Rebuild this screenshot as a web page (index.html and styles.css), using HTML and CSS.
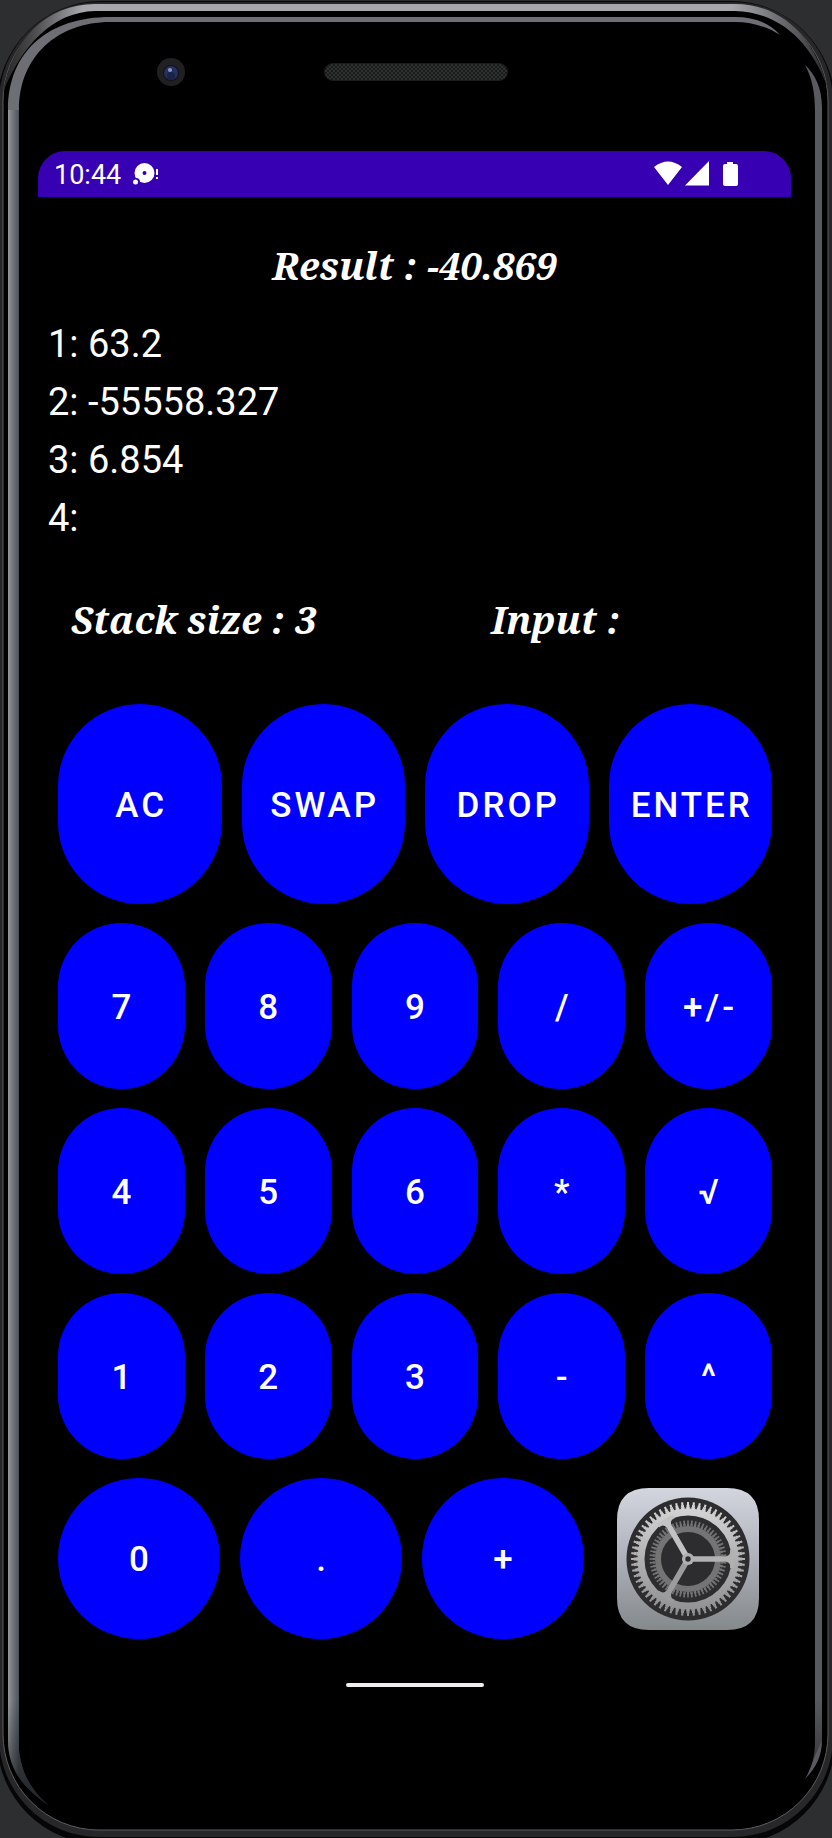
FILE: index.html
```html
<!DOCTYPE html>
<html lang="en">
<head>
<meta charset="utf-8">
<meta name="viewport" content="width=device-width, initial-scale=1">
<title>Stack Calculator</title>
<link rel="stylesheet" href="styles.css">
</head>
<body>
<div class="phone">
  <svg class="frame" viewBox="0 0 832 1838" preserveAspectRatio="none" aria-hidden="true">
    <defs>
      <linearGradient id="silver" gradientUnits="userSpaceOnUse" x1="0" y1="0" x2="832" y2="0">
        <stop offset="0" stop-color="#222"/><stop offset=".04" stop-color="#4a4a4c"/><stop offset=".1" stop-color="#a6a8ac"/>
        <stop offset=".88" stop-color="#a6a8ac"/><stop offset=".96" stop-color="#55565a"/><stop offset="1" stop-color="#222"/>
      </linearGradient>
      <linearGradient id="side" gradientUnits="userSpaceOnUse" x1="8" y1="0" x2="19" y2="0">
        <stop offset="0" stop-color="#94989b"/><stop offset=".35" stop-color="#777c82"/><stop offset="1" stop-color="#4c535b"/>
      </linearGradient>
      <linearGradient id="fade" gradientUnits="userSpaceOnUse" x1="0" y1="1700" x2="0" y2="1806">
        <stop offset="0" stop-color="#000" stop-opacity="0"/><stop offset="1" stop-color="#000" stop-opacity=".6"/>
      </linearGradient>
    </defs>
    <rect x="-3" y="1" width="838" height="1843" rx="104" fill="#060606"/>
    <rect x="-1" y="2" width="834" height="1835" rx="100" fill="#272729"/>
    <rect x="3" y="5" width="825" height="1825" rx="96" fill="#000" stroke="#5c5c5e"/>
    <path d="M3 92C12 40 46 4 95 4H735C785 4 817 42 829 92C814 46 782 12 735 11H95C52 12 22 46 3 92Z" fill="url(#silver)"/>
    <path d="M48 1805C22 1787 8 1768 8 1740V110H19V1750C22 1776 32 1790 48 1805Z" fill="url(#side)"/>
    <path d="M8 110C8 50 50 17 110 17H735C754 17 770 23 780 35C768 27 752 22 735 22H110C58 22 19 56 19 110Z" fill="#6d6f75"/>
    <path d="M805 65C815 74 822 88 822 108V1740C822 1756 816 1768 805 1779C813 1765 815 1755 815 1740V112C815 92 812 78 805 65Z" fill="#595a5f"/>
    <path d="M48 1805C22 1787 8 1768 8 1740V1700H19V1750C22 1776 32 1790 48 1805ZM805 1779L822 1740V1700H815V1740Z" fill="url(#fade)"/>
  </svg>

  <div class="hardware" aria-hidden="true">
    <svg class="camera" viewBox="0 0 30 30">
      <circle cx="15" cy="15" r="14" fill="#202022"/><circle cx="15" cy="16" r="8" fill="#11121a"/>
      <circle cx="15" cy="16" r="7" fill="#25305f"/><circle cx="15" cy="19" r="4" fill="#1b2348"/><circle cx="14" cy="13" r="2" fill="#8c98bd"/>
    </svg>
    <span class="speaker"></span>
  </div>

  <main class="screen">
    <header class="status">
      <span class="clock">10:44</span>
      <svg class="notice" viewBox="0 0 26 22" aria-hidden="true">
        <path fill="#fff" fill-rule="evenodd" d="M11.500 0a10 10 0 1 1 0 20a10 10 0 0 1 0-20ZM11.500 8a2 2 0 1 0 0 4a2 2 0 0 0 0-4Z"/>
        <circle cx="3" cy="19" r="4" fill="#3700b3"/><circle cx="2.500" cy="19" r="2.500" fill="#fff"/>
        <path stroke="#fff" stroke-width="2" d="M24 6v6M24 14v2"/>
      </svg>
      <svg class="signals" viewBox="0 0 84 26" aria-hidden="true">
        <path fill="#fff" d="M0 6Q14 -5 28 6L14 24ZM31 24.500L55 0V24.500ZM73 1h6v2h3q2 0 2 2v18q0 2-2 2H71q-2 0-2-2V5q0-2 2-2h2Z"/>
      </svg>
    </header>

    <section class="display">
      <output class="label result">Result : -40.869</output>
      <div class="stack"><div>1: 63.2</div><div>2: -55558.327</div><div>3: 6.854</div><div>4:</div></div>
      <div class="info"><span class="label">Stack size : 3</span><span class="label">Input :</span></div>
    </section>

    <section class="keys">
      <div class="row commands"><button>AC</button><button>SWAP</button><button>DROP</button><button>ENTER</button></div>
      <div class="row"><button>7</button><button>8</button><button>9</button><button>/</button><button>+/-</button></div>
      <div class="row"><button>4</button><button>5</button><button>6</button><button>*</button><button>√</button></div>
      <div class="row"><button>1</button><button>2</button><button>3</button><button>-</button><button>^</button></div>
      <div class="row last"><button>0</button><button>.</button><button>+</button>
        <button class="settings" aria-label="Settings">
          <svg viewBox="0 0 142 142" aria-hidden="true">
            <defs>
              <linearGradient id="plate" x1="0" y1="0" x2="0" y2="1"><stop offset="0" stop-color="#d3d6de"/><stop offset=".5" stop-color="#adb0b8"/><stop offset="1" stop-color="#84898c"/></linearGradient>
              <linearGradient id="metal" gradientUnits="userSpaceOnUse" x1="0" y1="-57" x2="0" y2="57"><stop offset="0" stop-color="#d8d8d9"/><stop offset=".5" stop-color="#b0b0b1"/><stop offset="1" stop-color="#8d8f91"/></linearGradient>
              <path id="spoke" d="M0 -2.800H38Q43 -3.500 42 -9L46 -9V9L42 9Q43 3.500 38 2.800H0Z"/>
            </defs>
            <path fill="url(#plate)" d="M32 0H110Q142 0 142 32V110Q142 142 110 142H32Q0 142 0 110V32Q0 0 32 0Z"/>
            <g transform="translate(71 71)" fill="none">
              <circle r="61.500" fill="#2d2d2f"/>
              <g stroke="#747475">
                <circle r="30" stroke-width="6"/>
                <circle r="34" stroke-width="2.500" pathLength="60" stroke-dasharray=".66 .34" stroke-dashoffset=".33"/>
                <circle r="36.500" stroke-width="4" pathLength="60" stroke-dasharray=".44 .56" stroke-dashoffset=".22"/>
              </g>
              <g stroke="url(#metal)">
                <circle r="47" stroke-width="7"/>
                <circle r="51" stroke-width="2" pathLength="60" stroke-dasharray=".7 .3" stroke-dashoffset=".35"/>
                <circle r="53" stroke-width="2.500" pathLength="60" stroke-dasharray=".54 .46" stroke-dashoffset=".27"/>
                <circle r="55.500" stroke-width="3" pathLength="60" stroke-dasharray=".36 .64" stroke-dashoffset=".18"/>
              </g>
              <g fill="#b1b1b2"><use href="#spoke"/><use href="#spoke" transform="rotate(120)" fill="#9b9c9e"/><use href="#spoke" transform="rotate(240)" fill="#c2c2c4"/><circle r="6"/></g>
              <circle r="2.700" fill="#2d2d2f"/>
            </g>
          </svg>
        </button>
      </div>
    </section>
    <div class="home"></div>
  </main>
</div>
</body>
</html>
```
FILE: styles.css
```css
* { box-sizing: border-box; }

body {
  margin: 0;
  background: #2d2e30;
  color: #fff;
  font-family: Roboto, sans-serif;
}

.phone {
  position: relative;
  min-height: 100vh;
  padding: 57px 41px 150px 38px;
  overflow: hidden;
}

.frame {
  position: absolute;
  inset: 0;
  width: 100%;
  height: 100%;
}

.hardware {
  position: relative;
  display: grid;
  grid-template-columns: 1fr 184px 1fr;
  height: 94px;
  padding-left: 3px;
  align-items: start;
}

.camera {
  width: 30px;
  height: 30px;
  margin-left: 115px;
}

.speaker {
  height: 18px;
  margin-top: 6px;
  border: 1px solid #1c1c1d;
  border-radius: 9px;
  background: repeating-conic-gradient(#303131 0 25%, #191a1a 0 50%) 0 0 / 4px 4px;
}

.screen { position: relative; }

.status {
  display: flex;
  align-items: center;
  height: 46px;
  padding: 0 53px 0 16px;
  border-radius: 27px 27px 0 0;
  background: #3700b3;
}

.clock {
  padding-top: 2px;
  font-size: 27px;
  line-height: 44px;
}

.notice {
  width: 26px;
  height: 22px;
  margin-left: 12px;
}

.signals {
  width: 84px;
  height: 26px;
  margin-left: auto;
}

.display { padding: 40px 10px 0; }

.label {
  font-family: "Noto Serif", "Droid Serif", "Liberation Serif", serif;
  font-size: 38px;
  font-style: italic;
  font-weight: 700;
  line-height: 56px;
  white-space: pre;
}

.result {
  display: block;
  text-align: center;
}

.stack {
  padding-top: 22px;
  font-size: 38px;
  line-height: 58px;
}

.info {
  display: grid;
  grid-template-columns: 1fr 1fr;
  gap: 154px;
  padding: 44px 24px 0 23px;
}

.keys {
  display: grid;
  gap: 19px;
  padding: 57px 19px 0 20px;
}

.row {
  display: grid;
  grid-template-columns: repeat(5, 1fr);
  grid-auto-rows: 166px;
  gap: 20px;
}

.commands {
  grid-template-columns: repeat(4, 1fr);
  grid-auto-rows: 200px;
}

.last {
  grid-template-columns: repeat(3, 1fr) 168px;
  grid-auto-rows: 161px;
}

button {
  min-width: 0;
  padding: 2px 0 0;
  border: 0;
  border-radius: 100px;
  background: #00f;
  color: #fff;
  font-family: Roboto, sans-serif;
  font-size: 35px;
  font-weight: 500;
  letter-spacing: 3px;
  text-indent: 3px;
}

.settings {
  display: grid;
  place-items: center;
  padding: 0;
  background: none;
}

.settings svg {
  width: 142px;
  height: 142px;
}

.home {
  width: 138px;
  height: 4px;
  margin: 44px auto 0;
  border-radius: 2px;
  background: #f0eded;
}
```
